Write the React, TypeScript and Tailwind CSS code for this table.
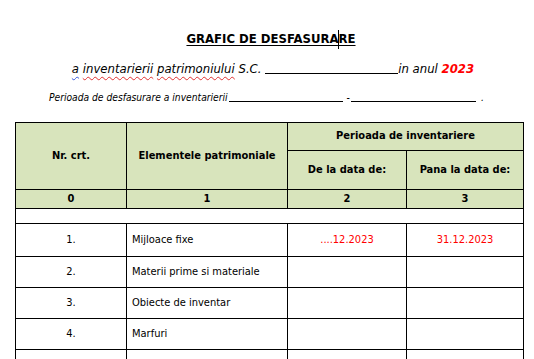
import React from "react";

const font = { fontFamily: '"DejaVu Sans Condensed", "DejaVu Sans", sans-serif' };

export default function App() {
  const hdr = "bg-[#d8e4bc] border border-black font-bold text-[11px] text-center text-black";
  const cell = "border border-black text-[11px]";
  const rows = [
    { n: "1.", t: "Mijloace fixe", a: "....12.2023", b: "31.12.2023", h: "h-[33px]" },
    { n: "2.", t: "Materii prime si materiale", a: "", b: "", h: "h-[31px]" },
    { n: "3.", t: "Obiecte de inventar", a: "", b: "", h: "h-[31px]" },
    { n: "4.", t: "Marfuri", a: "", b: "", h: "h-[31px]" },
    { n: "", t: "", a: "", b: "", h: "h-[31px]" },
  ];
  return (
    <div className="w-[534px] h-[359px] bg-white overflow-hidden text-black" style={font}>
      <div className="flex justify-center pt-[31px] pl-[8px]">
        <span className="relative font-bold text-[13px] underline underline-offset-[2px] leading-[16px]">
          GRAFIC DE DESFASURARE
          <span className="absolute left-[152px] top-[-1px] w-px h-[19px] bg-black"></span>
        </span>
      </div>
      <div className="flex justify-center pt-[14px] pl-[12px]">
        <span className="italic text-[13px] leading-[16px]">
          <span className="underline decoration-wavy decoration-[#3b5bdb] underline-offset-[3px] decoration-1">a</span>{" "}
          <span className="underline decoration-wavy decoration-[#e03131] underline-offset-[3px] decoration-1">inventarierii</span>{" "}
          <span className="underline decoration-wavy decoration-[#e03131] underline-offset-[3px] decoration-1">patrimoniului</span>{" "}
          S.C. <span className="inline-block w-[133px] border-b border-black align-[-1px]"></span>in anul{" "}
          <span className="font-bold text-[#ff0000]">2023</span>
        </span>
      </div>
      <div className="flex justify-start pt-[14px] pl-[49px]">
        <span className="italic text-[10.2px] leading-[14px] whitespace-nowrap">
          Perioada de desfasurare a inventarierii
          <span className="inline-block w-[114px] border-b border-black ml-[1px] align-[-1px]"></span>
          <span className="ml-[4px]">-</span>
          <span className="inline-block w-[125px] border-b border-black ml-[1px] align-[-1px]"></span>
          <span className="ml-[5px]">.</span>
        </span>
      </div>
      <div className="pl-[15px] pt-[17px]">
        <table className="border-collapse table-fixed w-[508px]">
          <colgroup>
            <col className="w-[111px]" />
            <col className="w-[161px]" />
            <col className="w-[119px]" />
            <col className="w-[117px]" />
          </colgroup>
          <tbody>
            <tr className="h-[28px]">
              <td rowSpan={2} className={hdr}>Nr. crt.</td>
              <td rowSpan={2} className={hdr}>Elementele patrimoniale</td>
              <td colSpan={2} className={hdr}>Perioada de inventariere</td>
            </tr>
            <tr className="h-[39px]">
              <td className={hdr}>De la data de:</td>
              <td className={hdr}>Pana la data de:</td>
            </tr>
            <tr className="h-[19px]">
              <td className={hdr}>0</td>
              <td className={hdr}>1</td>
              <td className={hdr}>2</td>
              <td className={hdr}>3</td>
            </tr>
            <tr className="h-[15px]">
              <td colSpan={4} className="border border-black"></td>
            </tr>
            {rows.map((r, i) => (
              <tr key={i} className={r.h}>
                <td className={cell + " text-center text-black"}>{r.n}</td>
                <td className={cell + " pl-[5px] text-black"}>{r.t}</td>
                <td className={cell + " text-center text-[#ff0000]"}>{r.a}</td>
                <td className={cell + " text-center text-[#ff0000]"}>{r.b}</td>
              </tr>
            ))}
          </tbody>
        </table>
      </div>
    </div>
  );
}
